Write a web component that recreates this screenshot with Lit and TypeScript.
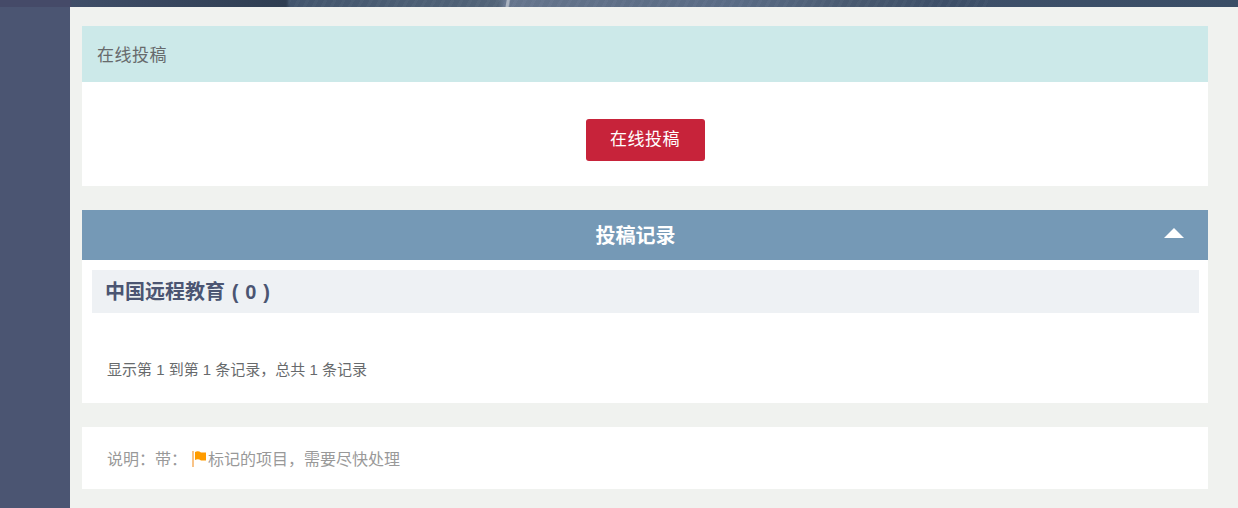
/**
 * Online submission page
 */

import { LitElement, css, html } from "lit";
import { customElement } from "lit/decorators.js";

@customElement("app-root")
export class AppRoot extends LitElement {
	static styles = css`
		:host {
			display: block;
			height: 508px;
			overflow: hidden;
			background: #f0f2ef;
			font-family: "Liberation Sans", "Noto Sans CJK SC", sans-serif;
			color: #676a6c;
		}

		/* banner strip: the bottom edge of a photo, so only streaks and tone */
		.topbar {
			height: 7px;
			background-image:
				linear-gradient(100deg, transparent 498.5px, #aab3c0 499.5px, #aab3c0 501.5px, transparent 503px),
				repeating-linear-gradient(118deg, rgba(255, 255, 255, 0.022) 0 3px, rgba(0, 0, 0, 0.012) 3px 8px),
				linear-gradient(
					90deg,
					#454a68 0,
					#454a68 70px,
					#3f4e68 72px,
					#2f3e52 286px,
					#43566e 290px,
					#536579 498px,
					#66768e 504px,
					#5f7088 620px,
					#5a6c86 740px,
					#48596f 860px,
					#3e5069 940px,
					#3a4e66 100%
				);
			background-size: 100% 100%, 700px 100%, 100% 100%;
			background-position: 0 0, 288px 0, 0 0;
			background-repeat: no-repeat;
		}

		.layout {
			display: flex;
			height: 501px;
		}

		.sidebar {
			width: 70px;
			flex: none;
			background: #4b5572;
		}

		.main {
			flex: 1;
			padding: 19px 30px 0 12px;
		}

		.panel {
			background: #fff;
			margin-bottom: 24px;
		}

		.panel-head {
			height: 54px;
			padding: 0 0 2px 15px;
			display: flex;
			align-items: center;
			background: #cce9e9;
			font-size: 17px;
			letter-spacing: 0.5px;
		}

		.submit-row {
			height: 104px;
			padding-left: 504px;
			padding-top: 37px;
			box-sizing: border-box;
		}

		.submit-btn {
			display: block;
			width: 119px;
			height: 42px;
			padding: 0 1px 5px 0;
			border: none;
			border-radius: 3px;
			background: #c7233a;
			color: #fff;
			font: inherit;
			font-size: 17px;
			letter-spacing: 0.5px;
		}

		.records {
			height: 193px;
		}

		.records-head {
			height: 48px;
			position: relative;
			display: flex;
			align-items: center;
			justify-content: center;
			padding: 0 19px 2px 0;
			background: #7599b6;
			color: #fff;
			font-size: 20px;
			font-weight: 700;
		}

		.arrow {
			position: absolute;
			left: 1082px;
			top: 18px;
			width: 20px;
			height: 10px;
		}

		.journal {
			margin: 10px 9px 0 10px;
			height: 41px;
			padding: 0 0 2px 13px;
			display: flex;
			align-items: center;
			background: #eef1f4;
			color: #4b5572;
			font-size: 20px;
			font-weight: 700;
			word-spacing: 1.3px;
		}

		.summary {
			padding: 47px 0 0 25px;
			font-size: 15px;
			line-height: 20px;
		}

		.note {
			height: 62px;
			box-sizing: border-box;
			padding: 23px 0 0 25px;
			font-size: 16px;
			line-height: 20px;
			color: #999;
			display: flex;
			align-items: flex-start;
		}

		.flag {
			width: 16px;
			height: 16px;
			margin-left: 5px;
			margin-top: 1px;
			flex: none;
		}
	`;

	render() {
		return html`
			<div class="topbar"></div>
			<div class="layout">
				<div class="sidebar"></div>
				<div class="main">
					<section class="panel">
						<div class="panel-head">在线投稿</div>
						<div class="submit-row">
							<button class="submit-btn">在线投稿</button>
						</div>
					</section>
					<section class="panel records">
						<div class="records-head">
							投稿记录
							<svg class="arrow" viewBox="0 0 20 10">
								<path d="M0 10 L10 0 L20 10 Z" fill="#fff"></path>
							</svg>
						</div>
						<div class="journal">中国远程教育 ( 0 )</div>
						<div class="summary">显示第 1 到第 1 条记录，总共 1 条记录</div>
					</section>
					<section class="panel note">
						<span>说明：带：</span>
						<svg class="flag" viewBox="0 0 16 16">
							<path d="M1 0 V16" stroke="#f7b469" stroke-width="1.6" fill="none"></path>
							<path d="M3 1 C5 0 7 0 9 1.5 L14 1.5 L14 9.5 L9 9.5 C7 8 5 8 3 9 Z" fill="#ff9c00"></path>
						</svg>
						<span>标记的项目，需要尽快处理</span>
					</section>
				</div>
			</div>
		`;
	}
}
